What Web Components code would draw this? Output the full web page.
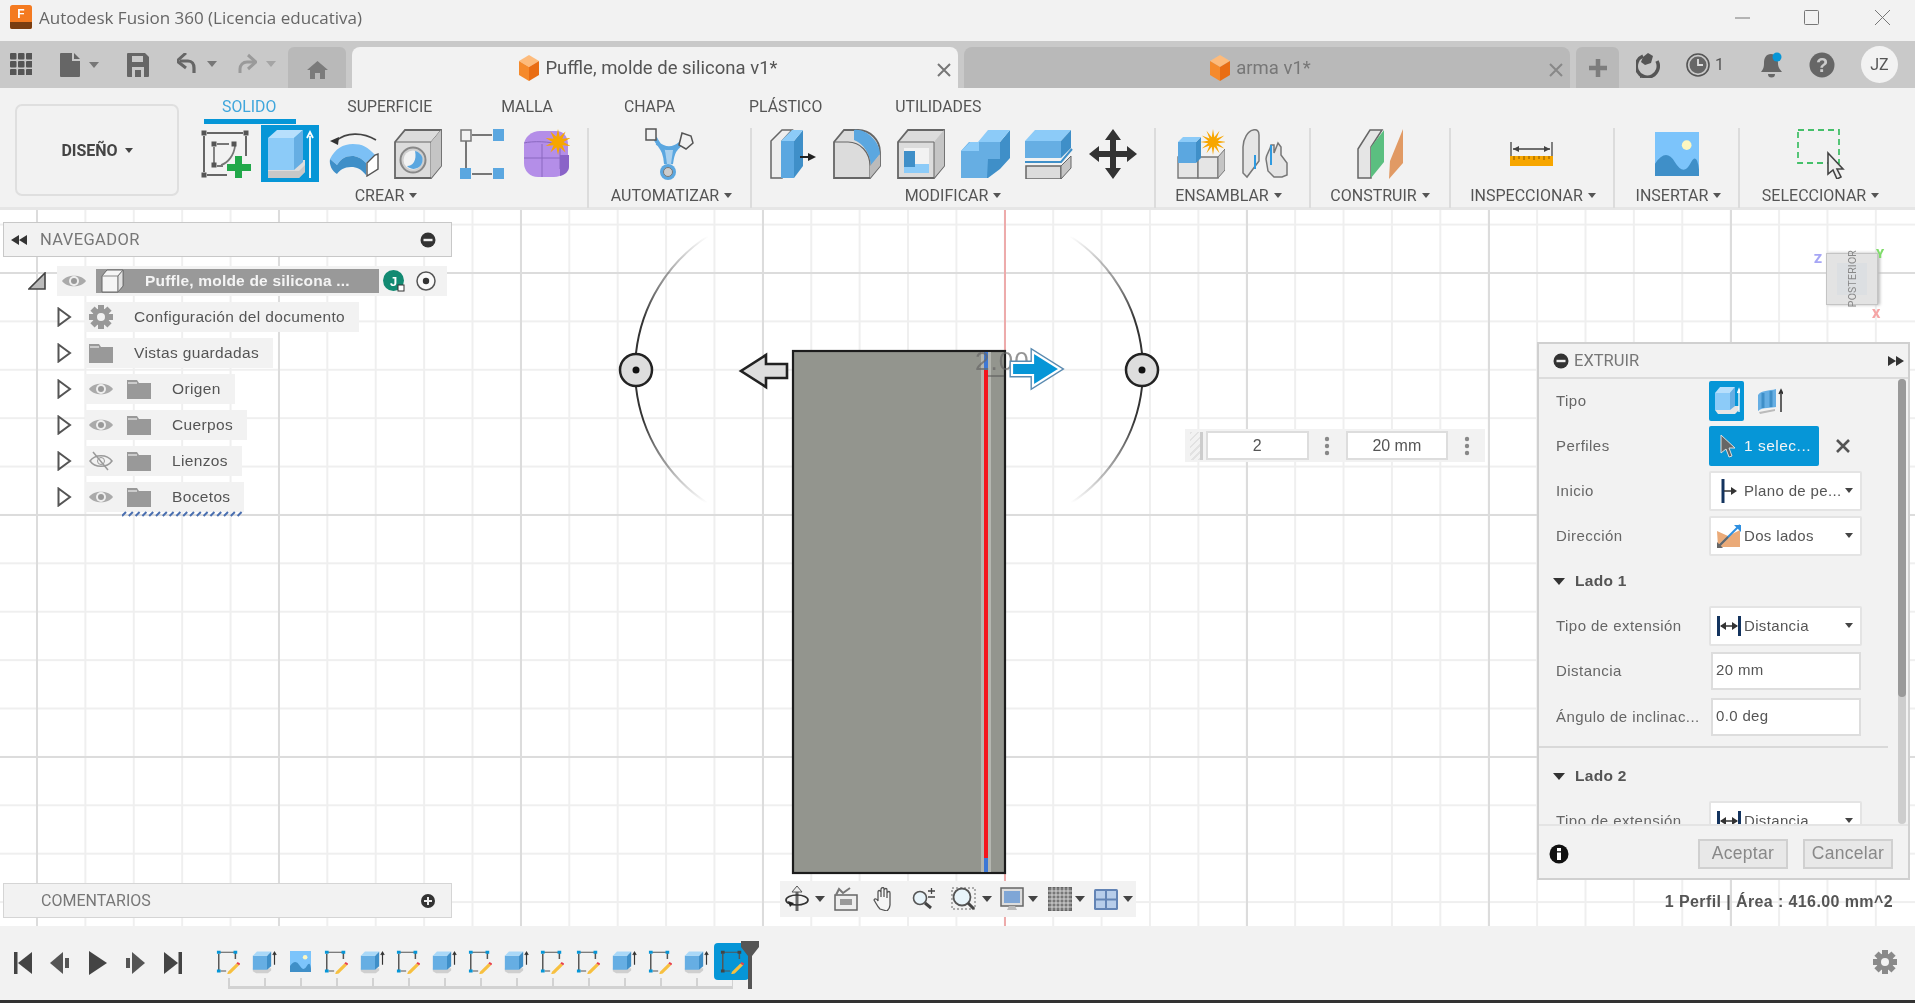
<!DOCTYPE html>
<html lang="es">
<head>
<meta charset="utf-8">
<title>Autodesk Fusion 360</title>
<style>
  html, body { margin: 0; height: 100%; overflow: hidden; background: #fff; }
  body { font-family: "Liberation Sans", Arial, sans-serif; }
</style>
</head>
<body>
<fusion-app></fusion-app>

<script>
// icon artwork, each one sized in real pixels
const star = (cx, cy, r1, r2, n) => {
  let pts = [];
  for (let i = 0; i < n * 2; i++) {
    const r = i % 2 ? r2 : r1;
    const a = (Math.PI * i) / n - Math.PI / 2;
    pts.push((cx + r * Math.cos(a)).toFixed(1) + "," + (cy + r * Math.sin(a)).toFixed(1));
  }
  return `<polygon points="${pts.join(" ")}" fill="#f7a600"/>`;
};
const svg = (w, h, body, vb) =>
  `<svg xmlns="http://www.w3.org/2000/svg" width="${w}" height="${h}" viewBox="${vb || `0 0 ${w} ${h}`}" preserveAspectRatio="none">${body}</svg>`;

const miniSketch = (active) => svg(24, 24, `
  <path d="M4 3H21M3 5V27M5 28H11M21 4V12" stroke="#555" stroke-width="1.600" fill="none"/>
  ${[[3, 3], [21, 3], [3, 28]].map((p) => `<rect x="${p[0] - 2}" y="${p[1] - 2}" width="4" height="4" fill="${active ? "#444" : "#0696d7"}"/>`).join("")}
  <path d="M13 29l9-11 3 2.400-9 11-4 1z" fill="#f7c040"/><path d="M22 18l1.500-2 3 2.400-1.500 2z" fill="#e8404c"/>`, "0 0 26 32");
const miniExtrude = svg(25, 24, `
  <path d="M1 30l4 3h14l4-4v-3H1z" fill="#cfcfcf"/>
  <path d="M1 8h17v20H1z" fill="#66aee3"/><path d="M18 8l5-6v21l-5 5z" fill="#3f8fc8"/><path d="M1 8l5-6h17l-5 6z" fill="#a9d8f8"/>
  <path d="M27 21V4M25 7l2-4 2 4" stroke="#333" stroke-width="1.400" fill="none"/>`, "0 0 30 34");
const imageIcon = (w, h) => svg(w, h, `
  <rect width="${w}" height="${h}" fill="#7cc4fb"/>
  <circle cx="${w * 0.72}" cy="${h * 0.3}" r="${w * 0.11}" fill="#fdf7c0"/>
  <path d="M0 ${h * 0.72}Q${w * 0.25} ${h * 0.35} ${w * 0.45} ${h * 0.68}T${w * 0.8} ${h * 0.72}T${w} ${h * 0.85}V${h}H0z" fill="#3f8fc8"/>`);

const ICONS = {
  logo: svg(22, 24, `<rect width="22" height="24" rx="2.500" fill="#f47a20"/><path d="M0 17h22v5a2 2 0 0 1-2 2H2a2 2 0 0 1-2-2z" fill="#7a3d10"/>
    <text x="11" y="13" font-size="12" font-weight="700" fill="#fff" text-anchor="middle" font-family="Liberation Sans">F</text>`),
  grid: svg(22, 22, [0, 8, 16].map((y) => [0, 8, 16].map((x) => `<rect x="${x}" y="${y}" width="6.500" height="6.500" rx="1" fill="#555"/>`).join("")).join("")),
  file: svg(20, 24, `<path d="M1 0h11v8h8v15a1 1 0 0 1-1 1H1a1 1 0 0 1-1-1V1a1 1 0 0 1 1-1z" fill="#666"/><path d="M14 0l6 6h-6z" fill="#666"/>`),
  save: svg(22, 24, `<path d="M1 0h17l4 4v19a1 1 0 0 1-1 1H1a1 1 0 0 1-1-1V1a1 1 0 0 1 1-1z" fill="#666"/><rect x="5" y="3" width="11" height="6" fill="#c9c9c9"/><path d="M5 14h12v10h-3v-7H8v7H5z" fill="#c9c9c9"/>`),
  undo: svg(20, 22, `<path d="M3 8h8c4 0 6 3 6 7v5" stroke="#666" stroke-width="3.200" fill="none"/><path d="M9 0L0 8l9 7" stroke="#666" stroke-width="3" fill="none"/>`),
  redo: svg(20, 22, `<path d="M17 9H10c-4 0-7 3-7 7v4" stroke="#9a9a9a" stroke-width="3" fill="none"/><path d="M11 2l8 7-8 7" stroke="#9a9a9a" stroke-width="3" fill="none"/>`),
  home: svg(21, 18, `<path d="M10.500 0L21 9h-3v9h-5v-6H8v6H3V9H0z" fill="#7b7b7b"/>`),
  cube: svg(22, 26, `<path d="M11 0l10 6-10 6L1 6z" fill="#fdbb7c"/><path d="M1 6l10 6v14L1 20z" fill="#f58a2c"/><path d="M21 6l-10 6v14l10-6z" fill="#e96d14"/>`),
  sync: svg(24, 26, `<path d="M7 4a11 11 0 1 0 14 5" stroke="#555" stroke-width="3.500" fill="none"/><path d="M12 1l5 3-2 7-6 2-4-3 2-5z" fill="#555"/><path d="M4 22l5 3-5 1z" fill="#555"/>`),
  clock: svg(24, 26, `<circle cx="12" cy="13" r="11" fill="none" stroke="#555" stroke-width="1.600"/><circle cx="12" cy="13" r="8.500" fill="#666"/><path d="M12 7v6h5" stroke="#ddd" stroke-width="1.800" fill="none"/>`),
  bell: svg(22, 28, `<path d="M10 3c5 0 7 4 7 9 0 5 2 6 4 9H0c2-3 3-4 3-9 0-5 2-9 7-9z" fill="#666"/><path d="M7 23h7a3.500 3.500 0 0 1-7 0z" fill="#666"/><circle cx="16" cy="6" r="4.500" fill="#0696d7"/>`),
  help: svg(26, 26, `<circle cx="13" cy="13" r="12.500" fill="#666"/><text x="13" y="20" font-size="20" font-weight="700" fill="#ccc" text-anchor="middle" font-family="Liberation Sans">?</text>`),
  sketch: svg(50, 48, `
    <path d="M6 3H42M3 6V42M6 45H26M45 6V26" stroke="#666" stroke-width="2" fill="none"/>
    <path d="M16 14H28M13 17V33M16 36H22M34 16C33 25 27 33 20 35" stroke="#777" stroke-width="1.800" fill="none"/>
    ${[[3, 3], [45, 3], [3, 45], [13, 14], [33, 14], [13, 35]].map((p) => `<rect x="${p[0] - 2.500}" y="${p[1] - 2.500}" width="5" height="5" fill="#555"/>`).join("")}
    <path d="M34 26h7v8h9v7h-9v7h-7v-7h-8v-7h8z" fill="#22a84a"/>`),
  extrude: svg(38, 52, `
    <path d="M1 38l5-6h32v12l-6 6H1z" fill="#ddd"/><path d="M1 43h31l6-6v7l-6 6H1z" fill="#bbb" opacity=".6"/>
    <path d="M1 10h26v32H1z" fill="#8ccbf8"/><path d="M27 10l9-8v32l-9 8z" fill="#66aee3"/><path d="M1 10l9-8h26l-9 8z" fill="#b7dffc"/>`),
  upArrow: svg(8, 48, `<path d="M4 48V6M1 8l3-6 3 6" stroke="#fff" stroke-width="1.800" fill="none"/>`),
  revolve: svg(50, 46, `
    <path d="M7 10C17 1 34 1 47 9" stroke="#444" stroke-width="1.600" fill="none"/><path d="M1 10l9-4-1 8z" fill="#333"/>
    <path d="M1 28C6 18 14 13 24 13c9 0 15 3 22 11l-9 8C32 27 28 25 23 25c-7 0-11 3-15 9z" fill="#7cc0f5"/>
    <path d="M1 28l7 6c4-6 8-9 15-9 5 0 9 2 14 7v12c-5-6-9-8-15-8-7 0-11 3-14 7-5-3-8-9-7-15z" fill="#3f8fc8"/>
    <path d="M38 32l8-8 3-1v15l-11 7z" fill="#fff" stroke="#555" stroke-width="1.400"/>`),
  hole: svg(48, 50, `
    <path d="M1 13L11 1h36v36L37 49H1z" fill="#dcdcdc" stroke="#666" stroke-width="1.800"/>
    <path d="M37 13v36M37 13L47 1M1 13h36" stroke="#666" stroke-width="1" fill="none"/><path d="M37 13L47 1v36L37 49z" fill="#c5c5c5"/>
    <circle cx="19" cy="31" r="12.500" fill="#cfcfcf" stroke="#888" stroke-width="2"/><circle cx="19" cy="31" r="9.500" fill="#f2f2f2"/>
    <path d="M21 22a9 9 0 1 1-8 15c6 0 10-6 8-15z" fill="#5ba7e0"/>`),
  form: svg(44, 50, `
    <path d="M12 6H32M6 12V40M12 45H32" stroke="#777" stroke-width="2" fill="none"/>
    <rect x="1" y="1" width="10" height="11" fill="#f2f2f2" stroke="#777" stroke-width="1.500"/>
    <rect x="33" y="0" width="11" height="12" fill="#5ba7e0"/><rect x="0" y="39" width="11" height="12" fill="#5ba7e0"/><rect x="33" y="39" width="11" height="12" fill="#5ba7e0"/>`),
  form3d: svg(48, 50, `
    <path d="M2 16C2 8 10 2 18 2h16c8 0 12 6 12 14v18c0 8-6 14-14 14H16C8 48 2 42 2 34z" fill="#b48ee8"/>
    <path d="M2 29h36M20 15V48M2 14C10 12 28 12 38 16M38 16V40" stroke="#8a68c0" stroke-width="1" fill="none"/>
    <path d="M38 26h9v12c0 4-4 8-9 9z" fill="#8a63c8"/>
    ${star(36, 13, 13, 5.500, 10)}`),
  automate: svg(50, 52, `
    <path d="M10 10C15 20 20 20 21 36M38 14C32 20 28 20 26 36M12 15C20 22 28 22 36 15" stroke="#5ba7e0" stroke-width="4" fill="none"/>
    <path d="M20 22h8l-2 14h-4z" fill="#a9d0ee"/>
    <rect x="1" y="1" width="10" height="11" fill="#f2f2f2" stroke="#555" stroke-width="1.500"/>
    <path d="M37 5l9 3 2 7-7 6-7-4z" fill="#f2f2f2" stroke="#555" stroke-width="1.500"/>
    <circle cx="23" cy="44" r="8" fill="#5ba7e0"/><circle cx="23" cy="44" r="4.500" fill="#ccc" stroke="#777"/>`),
  press: svg(46, 50, `
    <path d="M1 12L12 1h10L12 12v37H1z" fill="#eee" stroke="#666" stroke-width="1.500"/>
    <path d="M11 12h13v37H11z" fill="#5ba7e0"/><path d="M24 12l9-11v36l-9 12z" fill="#3f8fc8"/><path d="M11 12L22 1h11l-9 11z" fill="#8ccbf8"/>
    <path d="M30 28h12" stroke="#222" stroke-width="2"/><path d="M38 24l8 4-8 4z" fill="#222"/>`),
  fillet: svg(48, 50, `
    <path d="M1 13L11 1h14c12 0 22 10 22 22v14L37 49H1z" fill="#dcdcdc" stroke="#666" stroke-width="1.800"/>
    <path d="M21 1c12-2 26 12 26 24l-9 12C37 25 31 15 21 11z" fill="#5ba7e0"/>
    <path d="M1 13h14c12 0 22 10 22 24v12" stroke="#666" stroke-width="1.200" fill="none"/><path d="M37 37l10-12v12L37 49z" fill="#bbb"/>`),
  shell: svg(48, 50, `
    <path d="M1 13L11 1h36v36L37 49H1z" fill="#dcdcdc" stroke="#666" stroke-width="1.800"/>
    <path d="M37 13L47 1v36L37 49z" fill="#c5c5c5"/><path d="M1 13h36v36" stroke="#666" fill="none"/>
    <rect x="7" y="19" width="25" height="25" fill="#f2f2f2"/><rect x="7" y="22" width="11" height="16" fill="#3f8fc8"/>
    <path d="M18 22v13h14v9H7v-6h11z" fill="#8ccbf8"/>`),
  combine: svg(49, 50, `
    <path d="M18 13h21v17H27v19H0V22l8-9z" fill="#66aee3"/>
    <path d="M39 13L49 1v28L39 40V30H27l-1 19 1 0V30h12z" fill="#3f8fc8"/>
    <path d="M17 13L27 1h22L39 13zM0 22l9-9h9v9z" fill="#8ccbf8"/><path d="M27 30h12v10l-12 9z" fill="#3f8fc8"/>`),
  split: svg(48, 50, `
    <path d="M0 12L10 1h36L36 12z" fill="#8ccbf8"/><path d="M0 12h36v17H0z" fill="#66aee3"/><path d="M36 12L46 1v18L36 29z" fill="#3f8fc8"/>
    <path d="M0 33h36L47 20" stroke="#3f8fc8" stroke-width="2" fill="none"/>
    <path d="M1 37h35v13H1z" fill="#dcdcdc" stroke="#666" stroke-width="1.500"/><path d="M36 37l10-10v12L36 50z" fill="#c5c5c5" stroke="#666" stroke-width="1"/>`),
  move: svg(48, 50, `<path d="M24 0l8 11h-5v11h11v-5l10 8-10 8v-5H27v11h5l-8 11-8-11h5V28H10v5L0 25l10-8v5h11V11h-5z" fill="#333"/>`),
  assemble: svg(48, 50, `
    <path d="M1 28h20v21H1z" fill="#e5e5e5" stroke="#777" stroke-width="1.400"/><path d="M21 28h20v21H21z" fill="#e5e5e5" stroke="#777" stroke-width="1.400"/><path d="M41 28l7-8v21l-7 8z" fill="#c5c5c5" stroke="#777"/>
    <path d="M1 13h18v21H1z" fill="#5ba7e0"/><path d="M19 13l5-5v21l-5 5z" fill="#3f8fc8"/><path d="M1 13l5-5h18l-5 5z" fill="#8ccbf8"/>
    ${star(36, 13, 13, 5, 12)}`),
  joint: svg(46, 50, `
    <path d="M1 18c0-8 5-16 10-17 4-1 6 1 6 5v26L5 48l-4-4z" fill="#e5e5e5" stroke="#777" stroke-width="1.500"/>
    <path d="M24 30c0-5 4-8 5-14l3 0 0 8 4-10 3 4 0 8 6 8v12l-5 2H32l-6-6z" fill="#e5e5e5" stroke="#777" stroke-width="1.500"/>
    <path d="M13 26v14M29 16v20" stroke="#2e9ae0" stroke-width="2"/>`),
  plane: svg(46, 50, `
    <path d="M1 20L13 1h12L14 18v31H1z" fill="#e5e5e5" stroke="#666" stroke-width="1.500"/>
    <path d="M14 18L27 1v32L14 49z" fill="#5bbf80"/><path d="M33 32L46 0v34L32 50z" fill="#e19a64"/>`),
  measure: svg(44, 24, `
    <path d="M1 0V14M42 0V14M3 7H40" stroke="#444" stroke-width="1.300" fill="none"/>
    <path d="M3 7l6-3v6zM40 7l-6-3v6z" fill="#444"/>
    <rect y="14" width="43" height="10" fill="#f7a600"/>
    <path d="M4 14v4M9 14v3M14 14v4M19 14v3M24 14v4M29 14v3M34 14v4M39 14v3" stroke="#8a5a00" stroke-width="1"/>`),
  image: imageIcon(44, 44),
  imageMini: imageIcon(21, 21),
  select: svg(50, 50, `
    <rect x="1" y="1" width="41" height="33" fill="none" stroke="#45c06a" stroke-width="1.800" stroke-dasharray="6 4"/>
    <path d="M31 24v21l5-4 4 9 4-2-4-8h6z" fill="#eee" stroke="#444" stroke-width="1.600"/>`),
  twoLeft: svg(16, 10, `<path d="M8 0v10L0 5zM16 0v10L8 5z" fill="#333"/>`),
  twoRight: svg(16, 10, `<path d="M0 0v10l8-5zM8 0v10l8-5z" fill="#333"/>`),
  minus: svg(16, 16, `<circle cx="8" cy="8" r="7.500" fill="#333"/><rect x="3.500" y="6.800" width="9" height="2.400" fill="#eee"/>`),
  plusDot: svg(16, 16, `<circle cx="8" cy="8" r="7" fill="#333"/><path d="M4 8h8M8 4v8" stroke="#eee" stroke-width="2"/>`),
  arrowOpen: svg(15, 20, `<path d="M1.500 1.500L13 10 1.500 18.500z" fill="#fff" stroke="#555" stroke-width="2"/>`),
  arrowDown: svg(18, 18, `<path d="M17 1v16H1z" fill="#bbb" stroke="#444" stroke-width="1.600"/>`),
  eye: svg(24, 16, `<path d="M0 8C5 1 19 1 24 8 19 15 5 15 0 8z" fill="#aaa"/><circle cx="12" cy="8" r="5" fill="#eee"/><circle cx="12" cy="8" r="3" fill="#999"/>`),
  eyeOff: svg(24, 20, `<path d="M1 10C6 3 18 3 23 10 18 17 6 17 1 10z" fill="none" stroke="#999" stroke-width="1.500"/><circle cx="12" cy="10" r="3.500" fill="none" stroke="#999"/><path d="M4 1l15 18" stroke="#999" stroke-width="1.500"/>`),
  folder: svg(24, 20, `<path d="M0 1h10l2 3h12v16H0z" fill="#999"/><path d="M1 4h9" stroke="#eee" stroke-width="1.200"/>`),
  gear: svg(24, 24, `<circle cx="12" cy="12" r="8.500" fill="#999"/>${[0, 45, 90, 135].map((a) => `<rect x="9" y="0" width="6" height="24" fill="#999" transform="rotate(${a} 12 12)"/>`).join("")}<circle cx="12" cy="12" r="4" fill="#f2f2f2"/>`),
  box: svg(24, 24, `<path d="M1 7l5-6h16v16l-5 6H1z" fill="#f5f5f5" stroke="#666" stroke-width="1"/><path d="M1 7h16v16M17 7l5-6" stroke="#888" fill="none"/><path d="M17 7l5-6v16l-5 6z" fill="#e2e2e2" stroke="#777"/>`),
  userDot: svg(22, 22, `<circle cx="10.500" cy="10.500" r="10.500" fill="#128a72"/><text x="10.500" y="15.500" font-size="13" font-weight="700" fill="#fff" text-anchor="middle" font-family="Liberation Sans">J</text><rect x="15" y="15" width="6" height="6" fill="#fff" stroke="#333"/>`),
  target: svg(20, 20, `<circle cx="10" cy="10" r="9" fill="#fafafa" stroke="#555" stroke-width="1.500"/><circle cx="10" cy="10" r="3.200" fill="#333"/>`),
  typeA: svg(26, 30, `<path d="M1 24l3 4h17l4-4v-4H1z" fill="#e6e6e6"/><path d="M1 7h15v17H1z" fill="#8ccbf8"/><path d="M16 7l5-6v19l-5 4z" fill="#66aee3"/><path d="M1 7l5-6h15l-5 6z" fill="#b7dffc"/><path d="M25 26V4M23.500 7l1.500-4 1.500 4" stroke="#fff" stroke-width="1.300" fill="none"/>`),
  typeB: svg(26, 26, `<path d="M1 7C4 2 12 3 19 1v18c-4 1-14 0-18 4z" fill="#66aee3"/><path d="M6 5v15M14 3v16" stroke="#3f8fc8" stroke-width="3"/><path d="M2 24l16-3v2L3 26z" fill="#bbb"/><path d="M24 24V3M22 6l2-4 2 4" stroke="#333" stroke-width="1.500" fill="none"/>`),
  pointer: svg(16, 24, `<path d="M1 1v18l5-4 3 8 3-1-3-8h6z" fill="#666" stroke="#ddd" stroke-width="1"/>`),
  start: svg(16, 24, `<path d="M2 0V24" stroke="#14345f" stroke-width="3"/><path d="M3 12H12" stroke="#333" stroke-width="1.500"/><path d="M10 8l6 4-6 4z" fill="#333"/>`),
  direction: svg(26, 26, `<path d="M1 8L12 13 24 7V24H2z" fill="#eaaa78"/><path d="M2 24L24 2" stroke="#2e8fe0" stroke-width="2"/><path d="M18 2h7v7z" fill="#2e8fe0"/><path d="M1 19v6h6z" fill="#666"/><path d="M2 24L12 14" stroke="#666" stroke-width="1.800"/>`),
  distance: svg(24, 24, `<path d="M1.500 2V22M22.500 2V22" stroke="#14345f" stroke-width="3"/><path d="M4 12H20" stroke="#333" stroke-width="1.500"/><path d="M9 8l-6 4 6 4zM15 8l6 4-6 4z" fill="#333"/>`),
  info: svg(20, 20, `<circle cx="10" cy="10" r="9.500" fill="#111"/><rect x="8" y="8.500" width="4" height="7.500" fill="#fff"/><rect x="8" y="4" width="4" height="3.200" fill="#fff"/>`),
  orbit: svg(24, 26, `<path d="M12 2v23" stroke="#666" stroke-width="3"/><path d="M12 0l5 6H7z" fill="#eee" stroke="#555"/><ellipse cx="12" cy="14" rx="11" ry="5" fill="none" stroke="#333" stroke-width="1.700"/><path d="M3 15l6 2-4 4z" fill="#222"/>`),
  capture: svg(24, 24, `<rect x="1" y="8" width="22" height="15" fill="#eee" stroke="#666" stroke-width="1.500"/><rect x="6" y="12" width="12" height="6" fill="#999"/><path d="M2 8l3-6 4 4 7-5" stroke="#777" stroke-width="2" fill="none"/>`),
  hand: svg(24, 24, `<path d="M7 22C4 19 3 16 1 13c1-2 3-1 4 1V5c0-2 2-2 3 0v5-8c1-2 3-2 3 0v8-7c1-2 3-2 3 0v8-5c1-2 3-2 3 0v12c0 3-2 5-3 6z" fill="#f5f5f5" stroke="#555" stroke-width="1.300"/>`),
  zoomPm: svg(24, 24, `<circle cx="8" cy="11" r="6.500" fill="#e8f4fa" stroke="#555" stroke-width="1.600"/><path d="M13 16l6 5" stroke="#444" stroke-width="3"/><path d="M16 4h7M19.500 1v6M16 10h7" stroke="#444" stroke-width="1.300"/>`),
  zoomFit: svg(25, 24, `<path d="M1 1h23v21H1z" fill="none" stroke="#666" stroke-dasharray="2 2"/><circle cx="11" cy="10" r="8.500" fill="#e8f4fa" stroke="#555" stroke-width="1.800"/><path d="M17 16l6 6" stroke="#444" stroke-width="3"/>`),
  display: svg(24, 24, `<rect x="1" y="1" width="22" height="18" fill="#ddd" stroke="#666" stroke-width="1.500"/><rect x="4" y="4" width="16" height="12" fill="#7fa6d6"/><path d="M7 23h10l-2-4H9z" fill="#bbb"/>`),
  gridView: svg(24, 24, `<rect x=".5" y=".5" width="23" height="23" fill="#777" stroke="#666"/><path d="M4 0v24M8 0v24M12 0v24M16 0v24M20 0v24M0 4h24M0 8h24M0 12h24M0 16h24M0 20h24" stroke="#ddd" stroke-width=".9"/>`),
  viewports: svg(24, 21, `<rect width="24" height="21" rx="1.500" fill="#6384b5"/><rect x="2" y="2" width="9" height="7.500" fill="#b7cdea"/><rect x="13" y="2" width="9" height="7.500" fill="#b7cdea"/><rect x="2" y="11.500" width="9" height="7.500" fill="#b7cdea"/><rect x="13" y="11.500" width="9" height="7.500" fill="#b7cdea"/>`),
  first: svg(18, 22, `<rect width="3.500" height="22" fill="#444"/><path d="M18 0v22L4 11z" fill="#444"/>`),
  prev: svg(20, 22, `<path d="M13 0v22L0 11z" fill="#555"/><rect x="15" y="6" width="4" height="10" fill="#555"/>`),
  play: svg(18, 24, `<path d="M0 0v24l18-12z" fill="#444"/>`),
  next: svg(20, 22, `<path d="M7 0v22l13-11z" fill="#555"/><rect x="1" y="6" width="4" height="10" fill="#555"/>`),
  last: svg(18, 22, `<rect x="14.500" width="3.500" height="22" fill="#444"/><path d="M0 0v22l14-11z" fill="#444"/>`),
  miniSketch: miniSketch(false),
  miniSketchOn: miniSketch(true),
  miniExtrude,
  settings: svg(24, 24, `<circle cx="12" cy="12" r="8.500" fill="#8a8a8a"/>${[0, 45, 90, 135].map((a) => `<rect x="9" y="0" width="6" height="24" fill="#8a8a8a" transform="rotate(${a} 12 12)"/>`).join("")}<circle cx="12" cy="12" r="4" fill="#f2f2f2"/>`),
};

class FxBase extends HTMLElement {
  constructor() {
    super();
    this.attachShadow({ mode: "open" });
  }
  connectedCallback() {
    this.shadowRoot.innerHTML = `<style>${this.styles()}</style>${this.markup()}`;
  }
  styles() { return ":host{display:block}"; }
  markup() { return "<slot></slot>"; }
  attr(name, fallback = "") {
    return this.hasAttribute(name) ? this.getAttribute(name) : fallback;
  }
}

class FxIcon extends FxBase {
  styles() { return ":host{display:inline-flex;flex:none;line-height:0}"; }
  markup() { return ICONS[this.attr("name")] || ""; }
}

class FxCaret extends FxBase {
  styles() {
    return `:host{display:inline-block;flex:none;width:0;height:0;
      border-left:var(--s,5px) solid transparent;border-right:var(--s,5px) solid transparent;
      border-top:calc(var(--s,5px) + 1px) solid var(--c,#666)}`;
  }
  markup() { return ""; }
}

class TitleBar extends FxBase {
  styles() {
    return `:host{display:flex;align-items:center;height:41px;background:#f2f2f2;padding:0 0 7px 10px;box-sizing:border-box}
      span{margin-left:7px;font:17px "Open Sans",sans-serif;color:#666}
      .ctl{margin-left:auto;display:flex;padding-right:25px;align-items:center}`;
  }
  markup() {
    return `<fx-icon name="logo"></fx-icon><span>Autodesk Fusion 360 (Licencia educativa)</span>
      <div class="ctl">
        ${svg(15, 15, `<path d="M0 8H15" stroke="#777" stroke-width="1"/>`)}
        <span style="width:54px;margin:0"></span>
        ${svg(15, 15, `<rect x=".5" y=".5" width="14" height="14" rx="1" fill="none" stroke="#777"/>`)}
        <span style="width:56px;margin:0"></span>
        ${svg(15, 15, `<path d="M0 0L15 15M15 0L0 15" stroke="#777" stroke-width="1"/>`)}
      </div>`;
  }
}

class DocTab extends FxBase {
  styles() {
    return `:host{display:flex;align-items:center;height:41px;flex:none;border-radius:8px 8px 0 0;box-sizing:border-box;padding:1px 14px 0 0;
        background:#b9b9b9;color:#777;position:relative;justify-content:center;font:18.500px Roboto,sans-serif}
      :host([active]){background:#f2f2f2;color:#555}
      fx-icon{margin-right:5px}
      .x{position:absolute;right:7px;top:13px}`;
  }
  markup() {
    const c = this.hasAttribute("active") ? "#777" : "#888";
    return `<fx-icon name="cube"></fx-icon><span><slot></slot></span>
      <span class="x">${svg(14, 14, `<path d="M1 1L13 13M13 1L1 13" stroke="${c}" stroke-width="2"/>`)}</span>`;
  }
}

class TabStrip extends FxBase {
  styles() {
    return `:host{display:flex;align-items:flex-end;height:47px;background:#c9c9c9;--c:#777}
      .i{display:flex;align-items:center;position:relative;align-self:flex-start;margin-top:12px;gap:9px}
      .home{width:58px;height:41px;background:#b9b9b9;border-radius:6px 6px 0 0;display:flex;align-items:center;justify-content:center;margin-left:12px;padding-top:4px;box-sizing:border-box}
      .plus{width:43px;height:41px;background:#b9b9b9;border-radius:6px 6px 0 0;display:flex;align-items:center;justify-content:center;margin-left:6px}
      .count{font:16px Roboto,sans-serif;color:#555}
      .av{width:37px;height:37px;border-radius:50%;background:#f2f2f2;display:flex;align-items:center;justify-content:center;font:16px Roboto,sans-serif;color:#555;margin-left:26px}
      .status{display:flex;align-items:center;align-self:flex-start;margin-top:5px}`;
  }
  markup() {
    return `
      <div class="i" style="margin-left:10px"><fx-icon name="grid"></fx-icon></div>
      <div class="i" style="margin-left:28px"><fx-icon name="file"></fx-icon><fx-caret></fx-caret></div>
      <div class="i" style="margin-left:28px"><fx-icon name="save"></fx-icon></div>
      <div class="i" style="margin-left:28px"><fx-icon name="undo"></fx-icon><fx-caret style="margin-left:1px"></fx-caret></div>
      <div class="i" style="margin-left:20px;--c:#a5a5a5"><fx-icon name="redo"></fx-icon><fx-caret></fx-caret></div>
      <div class="home"><fx-icon name="home"></fx-icon></div>
      <doc-tab active style="width:606px;margin-left:6px">Puffle, molde de silicona v1*</doc-tab>
      <doc-tab style="width:606px;margin-left:6px">arma v1*</doc-tab>
      <div class="plus">${svg(20, 20, `<path d="M10 1V19M1 10H19" stroke="#7d7d7d" stroke-width="4.500"/>`)}</div>
      <div class="status">
        <fx-icon name="sync" style="margin-left:17px"></fx-icon>
        <fx-icon name="clock" style="margin-left:26px"></fx-icon><span class="count" style="margin-left:5px">1</span>
        <fx-icon name="bell" style="margin-left:37px"></fx-icon>
        <fx-icon name="help" style="margin-left:26px"></fx-icon>
        <div class="av">JZ</div>
      </div>`;
  }
}

class RibbonGroup extends FxBase {
  styles() {
    return `:host{display:flex;flex-direction:column;align-items:center;flex:none;box-sizing:border-box;height:80px;margin-top:3px;border-right:2px solid #dcdcdc}
      :host(:last-child){border-right:none}
      .row{display:flex;height:57px;margin-top:-3px;align-items:center;justify-content:center}
      .lab{display:flex;align-items:center;gap:5px;font:16px Roboto,sans-serif;color:#555;margin-top:3px;height:20px;--c:#555;--s:4px}`;
  }
  markup() {
    const shift = this.attr("label-shift", "0");
    return `<div class="row"><slot></slot></div>
      <div class="lab" style="transform:translateX(${shift}px)">${this.attr("label")}<fx-caret></fx-caret></div>`;
  }
}

class RibbonTool extends FxBase {
  styles() {
    return `:host{display:flex;width:64px;height:57px;align-items:center;justify-content:center;flex:none;gap:2px}
      :host([on]) .bg{background:#0696d7;width:58px;height:57px;display:flex;align-items:center;justify-content:center;gap:1px}
      .bg{display:flex;align-items:center;justify-content:center;gap:2px}`;
  }
  markup() { return `<div class="bg"><slot></slot></div>`; }
}

class RibbonBar extends FxBase {
  styles() {
    return `:host{display:flex;height:122px;background:#f2f2f2;border-bottom:3px solid #e6e6e6;box-sizing:border-box}
      .design{flex:none;width:164px;height:92px;margin:16px 16px 0 15px;box-sizing:border-box;border:2px solid #dfdfdf;border-radius:7px;
        display:flex;align-items:center;justify-content:center;gap:7px;font:bold 16px Roboto,sans-serif;color:#444;--c:#444;--s:4px}
      .main{flex:1;min-width:0}
      .tabs{display:flex;height:37px;gap:71px;padding-left:27px;font:15.800px Roboto,sans-serif;color:#555;align-items:center}
      .tabs span{position:relative}
      .tabs .on{color:#3fa6dc}
      .tabs .on::after{content:"";position:absolute;left:-18px;right:-20px;bottom:-8px;height:5px;background:#0696d7}
      .groups{display:flex}`;
  }
  markup() {
    const t = (n, on) => `<ribbon-tool ${on ? "on" : ""}>${n.split(",").map((k) => `<fx-icon name="${k}"></fx-icon>`).join("")}</ribbon-tool>`;
    return `
      <div class="design">DISEÑO<fx-caret></fx-caret></div>
      <div class="main">
        <div class="tabs"><span class="on">SOLIDO</span><span>SUPERFICIE</span><span style="margin-left:-2px">MALLA</span><span>CHAPA</span><span style="margin-left:3px">PLÁSTICO</span><span style="margin-left:2px">UTILIDADES</span></div>
        <div class="groups">
          <ribbon-group label="CREAR" style="width:394px;padding-right:10px">
            ${t("sketch")}<ribbon-tool on><fx-icon name="extrude"></fx-icon><fx-icon name="upArrow"></fx-icon></ribbon-tool>${t("revolve")}${t("hole")}${t("form")}${t("form3d")}
          </ribbon-group>
          <ribbon-group label="AUTOMATIZAR" label-shift="2" style="width:163px">${t("automate")}</ribbon-group>
          <ribbon-group label="MODIFICAR" style="width:404px">${t("press")}${t("fillet")}${t("shell")}${t("combine")}${t("split")}${t("move")}</ribbon-group>
          <ribbon-group label="ENSAMBLAR" label-shift="-4" style="width:155px">${t("assemble")}${t("joint")}</ribbon-group>
          <ribbon-group label="CONSTRUIR" style="width:140px">${t("plane")}</ribbon-group>
          <ribbon-group label="INSPECCIONAR" label-shift="1" style="width:164px">${t("measure")}</ribbon-group>
          <ribbon-group label="INSERTAR" label-shift="2" style="width:125px">${t("image")}</ribbon-group>
          <ribbon-group label="SELECCIONAR" label-shift="-1" style="width:175px;padding-right:12px">${t("select")}</ribbon-group>
        </div>
      </div>`;
  }
}

class ModelView extends FxBase {
  styles() { return ":host{position:absolute;inset:0}svg{display:block}"; }
  markup() {
    return `<svg xmlns="http://www.w3.org/2000/svg" width="1915" height="716" viewBox="0 210 1915 716">
      <defs>
        <linearGradient id="up" gradientUnits="userSpaceOnUse" x1="0" y1="236" x2="0" y2="320"><stop offset="0" stop-color="#333" stop-opacity="0"/><stop offset="1" stop-color="#333"/></linearGradient>
        <linearGradient id="dn" gradientUnits="userSpaceOnUse" x1="0" y1="503" x2="0" y2="420"><stop offset="0" stop-color="#333" stop-opacity="0"/><stop offset="1" stop-color="#333"/></linearGradient>
      </defs>
      <path d="M1005 210V350M1005 873V926" stroke="#f29a9a" stroke-width="1.500"/>
      <path d="M708 236A161 161 0 0 0 636 353" fill="none" stroke="url(#up)" stroke-width="2"/>
      <path d="M636 387A161 161 0 0 0 707 503" fill="none" stroke="url(#dn)" stroke-width="2"/>
      <path d="M1070 236A161 161 0 0 1 1142 353" fill="none" stroke="url(#up)" stroke-width="2"/>
      <path d="M1142 387A161 161 0 0 1 1071 503" fill="none" stroke="url(#dn)" stroke-width="2"/>
      ${[636, 1142].map((x) => `<circle cx="${x}" cy="370" r="16" fill="#ddd" stroke="#222" stroke-width="2.500"/><circle cx="${x}" cy="370" r="3.500" fill="#111"/>`).join("")}
      <rect x="793" y="351" width="212" height="522" fill="#93958e" stroke="#1c1c1c" stroke-width="2.200"/>
      <rect x="981" y="352" width="10" height="520" fill="#b4b6b0"/>
      <rect x="984" y="370" width="4" height="502" fill="#f4141c"/>
      <rect x="984" y="352" width="4" height="18" fill="#3d78d6"/>
      <rect x="984" y="858" width="4" height="14" fill="#3d78d6"/>
      <path d="M988 376H1004" stroke="#555" stroke-width="1"/>
      <text x="975" y="370" font-family="Liberation Sans" font-size="26" letter-spacing="1" fill="#666" fill-opacity=".7">2.00</text>
      <path d="M787 364H766V355L741 371 766 387V378H787Z" fill="#ddd" stroke="#222" stroke-width="2.600" stroke-linejoin="miter"/>
      <path d="M1012 363H1033V352L1060 369 1033 386V375H1012Z" fill="#fff" stroke="#5b8bb0" stroke-width="5"/>
      <path d="M1012 363H1033V352L1060 369 1033 386V375H1012Z" fill="#0696d7" stroke="#fff" stroke-width="2.200"/>
    </svg>`;
  }
}

class TreeRow extends FxBase {
  styles() {
    return `:host{display:flex;align-items:center;height:36px;padding-left:54px;position:relative}
      .arrow{margin-right:13px;display:flex}
      .body{display:flex;align-items:center;height:30px;background:#f2f2f2;padding-left:4px;padding-right:var(--pr,14px);gap:14px}
      .t{font:15.500px "Liberation Sans",sans-serif;color:#555;margin-left:7px;letter-spacing:.35px}`;
  }
  markup() {
    const icons = this.attr("icons").split(",").map((k) => `<fx-icon name="${k}"></fx-icon>`).join("");
    return `<span class="arrow"><fx-icon name="arrowOpen"></fx-icon></span>
      <div class="body">${icons}<span class="t">${this.attr("text")}</span></div><slot></slot>`;
  }
}

class BrowserPanel extends FxBase {
  styles() {
    return `:host{position:absolute;left:3px;top:12px;width:449px}
      .head{display:flex;align-items:center;height:35px;box-sizing:border-box;background:#f2f2f2;border:1px solid #c8c8c8;padding:0 15px 0 7px}
      .head span{font:16.500px Roboto,sans-serif;letter-spacing:.4px;color:#777;margin-left:13px;flex:1}
      .root{display:flex;align-items:center;height:36px;margin-top:6px;padding-left:25px}
      .root .bg{display:flex;align-items:center;height:30px;background:#f2f2f2;width:390px;margin-left:11px;box-sizing:border-box;padding-left:5px}
      .sel{display:flex;align-items:center;width:283px;height:24px;margin-left:10px;background:#999;padding-left:5px;box-sizing:border-box}
      .sel span{font:bold 15.500px "Liberation Sans",sans-serif;color:#f4f4f4;margin-left:20px;letter-spacing:.2px;white-space:nowrap}
      .wave{position:absolute;left:119px;top:24px}`;
  }
  markup() {
    let wave = "";
    for (let x = 0; x < 121; x += 6.8) wave += `M${x} 5L${x + 4} 1`;
    return `
      <div class="head"><fx-icon name="twoLeft"></fx-icon><span>NAVEGADOR</span><fx-icon name="minus"></fx-icon></div>
      <div class="root"><fx-icon name="arrowDown"></fx-icon>
        <div class="bg"><fx-icon name="eye"></fx-icon>
          <div class="sel"><fx-icon name="box"></fx-icon><span>Puffle, molde de silicona ...</span></div>
          <fx-icon name="userDot" style="margin-left:4px"></fx-icon><fx-icon name="target" style="margin-left:11px"></fx-icon>
        </div>
      </div>
      <tree-row icons="gear" text="Configuración del documento"></tree-row>
      <tree-row icons="folder" text="Vistas guardadas"></tree-row>
      <tree-row icons="eye,folder" text="Origen"></tree-row>
      <tree-row icons="eye,folder" text="Cuerpos"></tree-row>
      <tree-row icons="eyeOff,folder" text="Lienzos"></tree-row>
      <tree-row icons="eye,folder" text="Bocetos">
        <span class="wave">${svg(122, 6, `<path d="${wave}" stroke="#4a6fb0" stroke-width="2"/>`)}</span>
      </tree-row>`;
  }
}

class CommentsPanel extends FxBase {
  styles() {
    return `:host{position:absolute;left:3px;top:673px;width:449px;height:35px;box-sizing:border-box;background:#f2f2f2;border:1px solid #d5d5d5;display:flex;align-items:center;padding:0 15px 0 37px;font:16px Roboto,sans-serif;color:#777}
      span{flex:1}`;
  }
  markup() { return `<span>COMENTARIOS</span><fx-icon name="plusDot"></fx-icon>`; }
}

class FormRow extends FxBase {
  styles() {
    return `:host{display:flex;align-items:center;height:45px;padding-left:17px;font:15px "Liberation Sans",sans-serif;color:#666;letter-spacing:.45px}
      label{width:153px;flex:none;white-space:nowrap}
      .c{display:flex;align-items:center;flex:none}`;
  }
  markup() { return `<label>${this.attr("label")}</label><div class="c"><slot></slot></div>`; }
}

class FxSelect extends FxBase {
  styles() {
    return `:host{display:flex;align-items:center;width:153px;height:40px;box-sizing:border-box;background:#fff;border:2px solid #e4e4e4;border-radius:2px;padding:0 7px 0 4px;--c:#444;--s:4px;color:#555;font:15px "Liberation Sans",sans-serif;letter-spacing:.35px}
      .ic{width:27px;display:flex;justify-content:center;flex:none}
      span{margin-left:2px;flex:1;white-space:nowrap}`;
  }
  markup() {
    return `<div class="ic"><fx-icon name="${this.attr("icon")}"></fx-icon></div><span>${this.attr("text")}</span><fx-caret></fx-caret>`;
  }
}

class FxInput extends FxBase {
  styles() {
    return `:host{display:flex;align-items:center;width:150px;height:38px;margin-left:2px;box-sizing:border-box;background:#fff;border:2px solid #ddd;padding:0 3px 3px;color:#555;font:15px "Liberation Sans",sans-serif;letter-spacing:.35px}`;
  }
}

class ExtrudePanel extends FxBase {
  styles() {
    return `:host{position:absolute;left:1537px;top:132px;width:373px;height:538px;box-sizing:border-box;background:#f2f2f2;border:2px solid #d0d0d0;display:flex;flex-direction:column}
      .head{display:flex;align-items:center;height:33px;flex:none;border-bottom:2px solid #dcdcdc;padding:0 4px 0 14px;font:16.500px Roboto,sans-serif;color:#777}
      .head span{margin-left:5px;flex:1}
      .body{flex:1;min-height:0;overflow:hidden;position:relative}
      .rows{margin-top:-1px}
      .sb{position:absolute;right:2px;top:0;bottom:0;width:8px;background:#cdcdcd;border-radius:4px}
      .sb i{display:block;height:318px;background:#999;border-radius:4px}
      .blue{background:#0696d7;border-radius:2px;display:flex;align-items:center;box-sizing:border-box}
      .sec{display:flex;align-items:center;height:44px;padding-left:14px;font:bold 15.500px "Liberation Sans",sans-serif;color:#555;letter-spacing:.3px;gap:10px;--c:#333;--s:6px}
      .sec.first{margin-top:1px}
      .sec fx-caret{--s:6px}
      .tall{margin-top:1px}
      hr{border:none;border-top:2px solid #d9d9d9;margin:7px 20px 6px 0}
      .sel-text{color:#f4f4f4;font:15.500px "Liberation Sans",sans-serif;letter-spacing:.5px;margin-left:8px}
      .foot{height:54px;flex:none;border-top:2px solid #e4e4e4;display:flex;align-items:center;padding:3px 15px 0 10px;box-sizing:border-box}
      .btn{display:flex;align-items:center;justify-content:center;width:90px;height:30px;box-sizing:border-box;background:#e8e8e8;border:2px solid #d0d0d0;color:#888;font:17.500px "Liberation Sans",sans-serif;letter-spacing:.3px}`;
  }
  markup() {
    return `
      <div class="head"><fx-icon name="minus"></fx-icon><span>EXTRUIR</span><fx-icon name="twoRight"></fx-icon></div>
      <div class="body">
        <div class="rows">
        <form-row label="Tipo">
          <div class="blue" style="width:35px;height:40px;justify-content:center"><fx-icon name="typeA"></fx-icon></div>
          <fx-icon name="typeB" style="margin-left:13px"></fx-icon>
        </form-row>
        <form-row label="Perfiles">
          <div class="blue" style="width:110px;height:40px;padding-left:11px"><fx-icon name="pointer"></fx-icon><span class="sel-text">1 selec...</span></div>
          <span style="margin-left:17px;display:flex">${svg(14, 14, `<path d="M1 1L13 13M13 1L1 13" stroke="#555" stroke-width="2.600"/>`)}</span>
        </form-row>
        <form-row label="Inicio"><fx-select icon="start" text="Plano de pe..."></fx-select></form-row>
        <form-row label="Dirección"><fx-select icon="direction" text="Dos lados"></fx-select></form-row>
        <div class="sec first"><fx-caret></fx-caret>Lado 1</div>
        <form-row label="Tipo de extensión"><fx-select icon="distance" text="Distancia"></fx-select></form-row>
        <form-row label="Distancia"><fx-input>20 mm</fx-input></form-row>
        <form-row class="tall" label="Ángulo de inclinac..."><fx-input>0.0 deg</fx-input></form-row>
        <hr>
        <div class="sec"><fx-caret></fx-caret>Lado 2</div>
        <form-row label="Tipo de extensión"><fx-select icon="distance" text="Distancia"></fx-select></form-row>
        </div>
        <div class="sb"><i></i></div>
      </div>
      <div class="foot">
        <fx-icon name="info"></fx-icon>
        <div class="btn" style="margin-left:auto">Aceptar</div>
        <div class="btn" style="margin-left:15px">Cancelar</div>
      </div>`;
  }
}

class InlineDim extends FxBase {
  styles() {
    return `:host{position:absolute;left:1185px;top:219px;width:300px;height:33px;background:#f2f2f2;display:flex;align-items:center;box-sizing:border-box;padding-left:5px}
      .grip{width:10px;height:28px;border-right:3px solid #ccc;background:repeating-linear-gradient(135deg,#e2e2e2 0 2px,#f2f2f2 2px 5px);margin-right:3px}
      .in{width:103px;height:29px;box-sizing:border-box;background:#fff;border:2px solid #ddd;display:flex;align-items:center;justify-content:center;font:16px "Liberation Sans",sans-serif;color:#555}
      .dots{width:37px;display:flex;justify-content:center}`;
  }
  markup() {
    const dots = `<div class="dots">${svg(6, 20, `<circle cx="3" cy="3" r="2.200" fill="#888"/><circle cx="3" cy="10" r="2.200" fill="#888"/><circle cx="3" cy="17" r="2.200" fill="#888"/>`)}</div>`;
    return `<div class="grip"></div><div class="in">2</div>${dots}<div class="in">20 mm</div>${dots}`;
  }
}

class ViewCube extends FxBase {
  styles() {
    return `:host{position:absolute;left:1812px;top:36px;width:78px;height:76px;font:bold 10px Roboto,sans-serif}
      .f{position:absolute;left:14px;top:7px;width:52px;height:52px;box-sizing:border-box;background:#e3e3e3;border:1px solid #c4c4c4;box-shadow:2px 0 3px #bbb;display:flex;align-items:center;justify-content:center}
      .in{position:absolute;inset:9px 10px;background:#dcdfe2}
      .t{position:relative;writing-mode:vertical-rl;transform:rotate(180deg);font-size:10.500px;font-weight:400;color:#888;letter-spacing:.2px}
      b{position:absolute;font-size:13px}`;
  }
  markup() {
    return `<div class="f"><div class="in"></div><div class="t">POSTERIOR</div></div>
      <b style="left:2px;top:5px;color:#a6a6f5">Z</b><b style="left:64px;top:0;color:#7fdc6a">Y</b><b style="left:60px;top:60px;color:#f5a5a5">X</b>`;
  }
}

class NavBar extends FxBase {
  styles() {
    return `:host{position:absolute;left:780px;top:671px;width:356px;height:36px;background:#f2f2f2;display:flex;align-items:center;padding-left:5px;box-sizing:border-box;--c:#444;--s:5px}
      fx-caret{margin-left:6px}`;
  }
  markup() {
    const i = (n, ml) => `<fx-icon name="${n}" style="margin-left:${ml}px"></fx-icon>`;
    return `${i("orbit", 0)}<fx-caret></fx-caret>${i("capture", 9)}${i("hand", 15)}${i("zoomPm", 15)}${i("zoomFit", 15)}<fx-caret></fx-caret>
      ${i("display", 8)}<fx-caret style="margin-left:4px"></fx-caret>${i("gridView", 10)}<fx-caret style="margin-left:3px"></fx-caret>${i("viewports", 9)}<fx-caret style="margin-left:5px"></fx-caret>`;
  }
}

class StatusNote extends FxBase {
  styles() {
    return `:host{position:absolute;right:22px;top:683px;font:bold 16px "Liberation Sans",sans-serif;color:#555;letter-spacing:.4px}`;
  }
}

class CanvasView extends FxBase {
  styles() {
    return `:host{display:block;position:relative;flex:1;min-height:0;overflow:hidden;background-color:#fff;
      background-image:
        linear-gradient(90deg,#dcdcdc 2px,transparent 2px),linear-gradient(#dcdcdc 2px,transparent 2px),
        linear-gradient(90deg,#efefef 2px,transparent 2px),linear-gradient(#efefef 2px,transparent 2px);
      background-size:242px 242px,242px 242px,48.4px 48.4px,48.4px 48.4px;
      background-position:36px 62px,36px 62px,36px 62px,36px 62px}`;
  }
}

class TimeLine extends FxBase {
  styles() {
    return `:host{display:flex;height:77px;box-sizing:border-box;background:#f2f2f2;border-bottom:3px solid #333;position:relative}
      .ctl{display:flex;align-items:center;height:74px;padding-left:14px}
      .track{position:absolute;left:210px;top:17px;display:flex}
      .s{width:36px;height:37px;display:flex;justify-content:center;align-items:center;flex:none;position:relative}
      .on{width:35px;background:#0696d7;border-radius:4px}
      .bar{position:absolute;left:228px;top:52px;width:505px;height:11px;box-sizing:border-box;border-bottom:3px solid #d2d2d2;
        background:repeating-linear-gradient(90deg,#d2d2d2 0 2px,transparent 2px 36px)}
      .mark{position:absolute;left:741px;top:15px}
      .gear{position:absolute;right:18px;top:24px}`;
  }
  markup() {
    const seq = ["miniSketch", "miniExtrude", "imageMini", "miniSketch", "miniExtrude", "miniSketch", "miniExtrude", "miniSketch", "miniExtrude", "miniSketch", "miniSketch", "miniExtrude", "miniSketch", "miniExtrude"];
    return `<div class="ctl">
        <fx-icon name="first"></fx-icon><fx-icon name="prev" style="margin-left:18px"></fx-icon><fx-icon name="play" style="margin-left:19px"></fx-icon>
        <fx-icon name="next" style="margin-left:18px"></fx-icon><fx-icon name="last" style="margin-left:19px"></fx-icon>
      </div>
      <div class="bar"></div>
      <div class="track">${seq.map((n) => `<div class="s"><fx-icon name="${n}"></fx-icon></div>`).join("")}<div class="s on"><fx-icon name="miniSketchOn"></fx-icon></div></div>
      <div class="mark">${svg(18, 48, `<path d="M0 0h18v6l-7 9v33H7V15L0 6z" fill="#555"/>`)}</div>
      <div class="gear"><fx-icon name="settings"></fx-icon></div>`;
  }
}

class FusionApp extends FxBase {
  styles() {
    return `:host{display:flex;flex-direction:column;width:1915px;height:1003px;overflow:hidden;filter:blur(.6px)}`;
  }
  markup() {
    return `<title-bar></title-bar><tab-strip></tab-strip><ribbon-bar></ribbon-bar>
      <canvas-view>
        <model-view></model-view>
        <browser-panel></browser-panel>
        <comments-panel></comments-panel>
        <inline-dim></inline-dim>
        <view-cube></view-cube>
        <nav-bar></nav-bar>
        <extrude-panel></extrude-panel>
        <status-note>1 Perfil | Área : 416.00 mm^2</status-note>
      </canvas-view>
      <time-line></time-line>`;
  }
}

const elements = {
  "fx-icon": FxIcon, "fx-caret": FxCaret, "title-bar": TitleBar, "doc-tab": DocTab, "tab-strip": TabStrip,
  "ribbon-group": RibbonGroup, "ribbon-tool": RibbonTool, "ribbon-bar": RibbonBar, "model-view": ModelView,
  "tree-row": TreeRow, "browser-panel": BrowserPanel, "comments-panel": CommentsPanel, "form-row": FormRow,
  "fx-select": FxSelect, "fx-input": FxInput, "extrude-panel": ExtrudePanel, "inline-dim": InlineDim,
  "view-cube": ViewCube, "nav-bar": NavBar, "status-note": StatusNote, "canvas-view": CanvasView,
  "time-line": TimeLine, "fusion-app": FusionApp,
};
Object.keys(elements).forEach((name) => customElements.define(name, elements[name]));
</script>
</body>
</html>
